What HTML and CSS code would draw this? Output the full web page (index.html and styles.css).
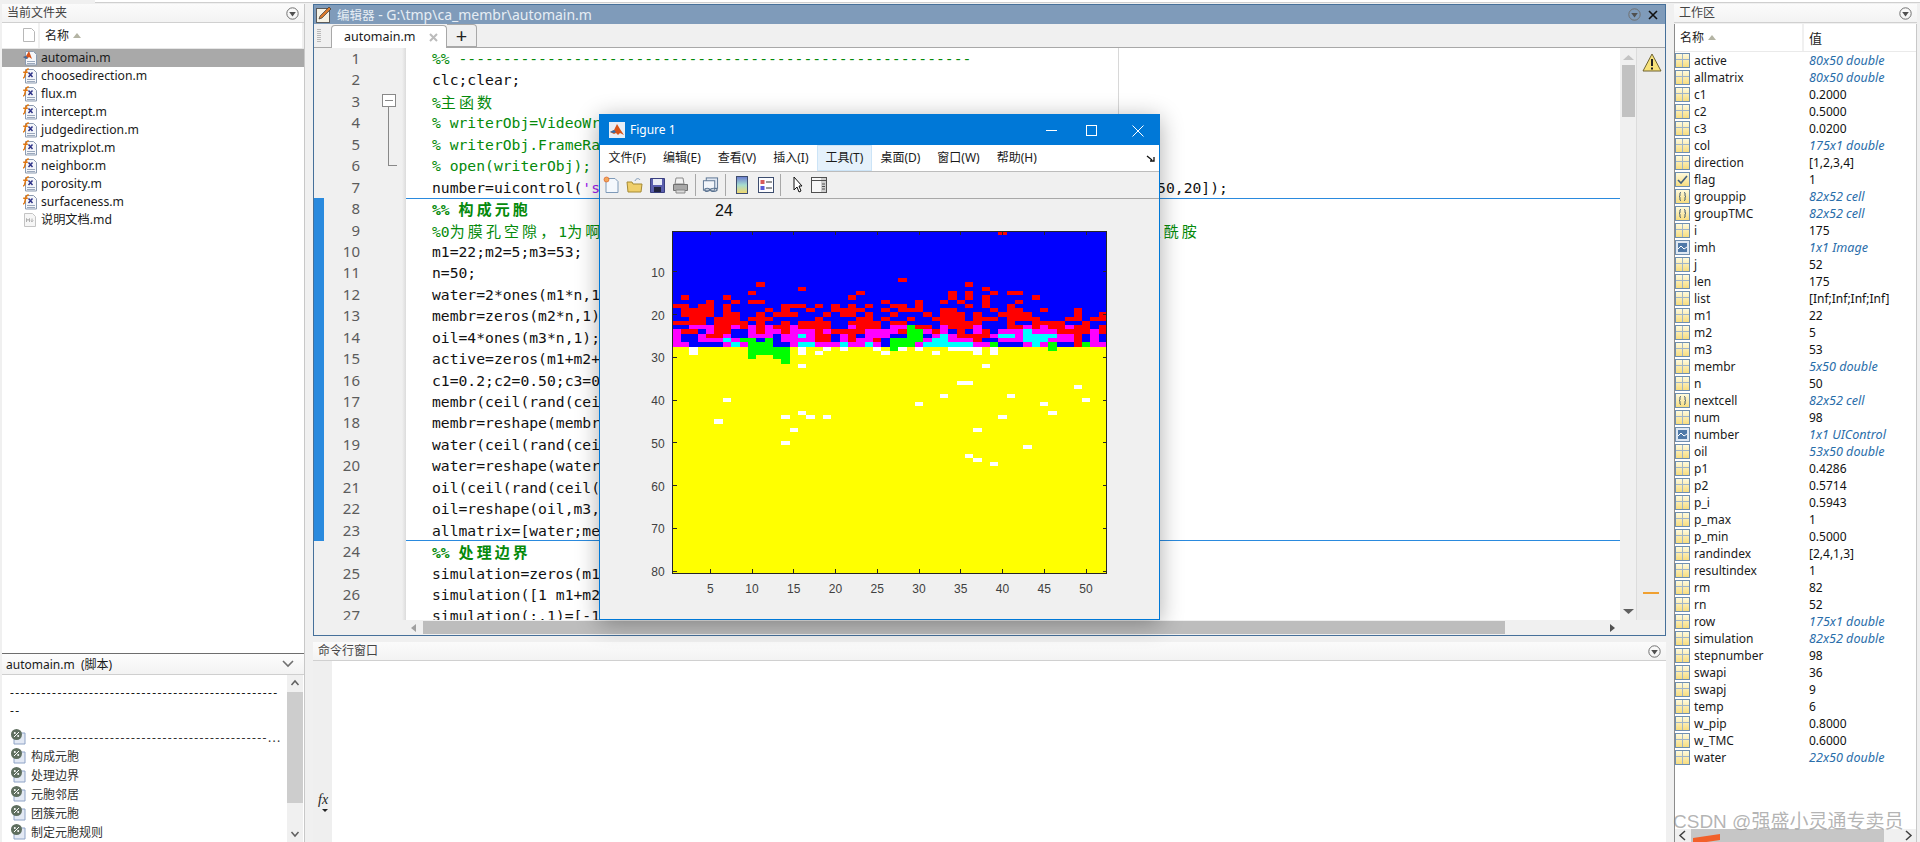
FILE: index.html
```html
<!DOCTYPE html>
<html lang="zh">
<head>
    <meta charset="UTF-8">
    <title>MATLAB</title>
    <link rel="stylesheet" href="styles.css">
</head>
<body>
<svg class="defs" width="0" height="0">
    <defs>
        <linearGradient id="yel" x1="0" y1="0" x2="0" y2="1"><stop offset="0" stop-color="#fffbe0"/><stop offset="1" stop-color="#f7dc7c"/></linearGradient>
        <symbol id="i-grid" viewBox="0 0 15 15"><rect x=".5" y=".5" width="14" height="14" fill="url(#yel)" stroke="#6f8fb0"/><path d="M7.500 1v13M1 6.500h13" stroke="#9fb4c8" fill="none"/></symbol>
        <symbol id="i-check" viewBox="0 0 15 15"><rect x=".5" y=".5" width="14" height="14" fill="url(#yel)" stroke="#6f8fb0"/><path d="M3 8l3 3 6-7" stroke="#44607c" stroke-width="1.600" fill="none"/></symbol>
        <symbol id="i-cell" viewBox="0 0 15 15"><rect x=".5" y=".5" width="14" height="14" fill="url(#yel)" stroke="#6f8fb0"/><path d="M6 3.500c-1.500 0-1 1.500-1 2.500s-.5 1.500-1 1.500c.5 0 1 .5 1 1.500s-.5 2.500 1 2.500M9 3.500c1.500 0 1 1.500 1 2.500s.5 1.500 1 1.500c-.5 0-1 .5-1 1.500s.5 2.500-1 2.500" stroke="#33506c" fill="none"/></symbol>
        <symbol id="i-obj" viewBox="0 0 15 15"><rect x=".5" y=".5" width="14" height="14" fill="#dfe8f2" stroke="#6f8fb0"/><rect x="3" y="3" width="9" height="9" fill="#4f79a8"/><path d="M3 9l3-3 3 3 3-2" stroke="#fff" fill="none"/></symbol>
        <symbol id="i-fx" viewBox="0 0 16 16"><path d="M3.500 1.500h8l3 3v10.500h-11z" fill="#f4f6fa" stroke="#8a9ab0"/><path d="M5 11.500h8M5 13.500h8" stroke="#9aa8bc"/><path d="M1 10c1.500 0 1.800-1.200 2.200-4S4.500 .8 6.800 1M1.200 4.200h4.600" stroke="#e0760f" stroke-width="1.500" fill="none"/><path d="M6.500 4.500l4 4.500M10.500 4.500L6.500 9" stroke="#2f3488" stroke-width="1.500"/></symbol>
        <symbol id="i-m" viewBox="0 0 16 16"><path d="M3.500 1.500h8l3 3v10.500h-11z" fill="#f4f6fa" stroke="#8a9ab0"/><path d="M5 11.500h8M5 13.500h8" stroke="#9aa8bc"/><path d="M1 7l3-1 3-5 3 8-3-2-2 2z" fill="#d8541a"/><path d="M1 7l3-1 2 2-2 1z" fill="#3a6ea5"/></symbol>
        <symbol id="i-md" viewBox="0 0 16 16"><path d="M2.500 1.500h8l3 3v10h-11z" fill="#f6f6f6" stroke="#c4c4c4"/><path d="M4.500 10V6.500l1.500 2 1.500-2V10M10 6.500v3M8.700 8.500l1.300 1.300 1.300-1.300" stroke="#b0b0b0" fill="none"/></symbol>
        <symbol id="i-pct" viewBox="0 0 16 16"><path d="M4 4h11v11H4z" fill="#e3e9f4" stroke="#8ea3c6"/><circle cx="6.500" cy="5.500" r="5.500" fill="#5f6f5f"/><path d="M4 8l5-5" stroke="#fff"/><circle cx="4.800" cy="4" r="1" fill="#fff"/><circle cx="8.200" cy="7" r="1" fill="#fff"/></symbol>
        <symbol id="i-menu" viewBox="0 0 13 13"><circle cx="6.500" cy="6.500" r="5.700" fill="none" stroke="#707070"/><path d="M3.200 5h6.600L6.500 9.500z" fill="#505050"/></symbol>
        <symbol id="i-fig" viewBox="0 0 16 16"><rect width="16" height="16" fill="#e8eef6"/><path d="M1 10l4-2 3-6 3 5 4 6-4-2-2 2-2-2-2 1z" fill="#d8541a"/><path d="M1 10l4-2 2 2-2 1z" fill="#2a6fb0"/></symbol>
    </defs>
</svg>

<div class="topstrip"></div>
<div class="desk">
    <div class="side">
        <section class="folder">
            <div class="ptitle">当前文件夹<svg class="pmenu"><use href="#i-menu"/></svg></div>
            <div class="fhead">
                <div class="fhead-ic"><svg width="12" height="14"><path d="M.5.500h8l3 3v10H.500z" fill="#fff" stroke="#b8b8b8"/></svg></div>
                <div class="fhead-name">名称<span class="sort"></span></div>
            </div>
            <div class="frow sel"><svg class="fi"><use href="#i-m"/></svg>automain.m</div>
            <div class="frow"><svg class="fi"><use href="#i-fx"/></svg>choosedirection.m</div>
            <div class="frow"><svg class="fi"><use href="#i-fx"/></svg>flux.m</div>
            <div class="frow"><svg class="fi"><use href="#i-fx"/></svg>intercept.m</div>
            <div class="frow"><svg class="fi"><use href="#i-fx"/></svg>judgedirection.m</div>
            <div class="frow"><svg class="fi"><use href="#i-fx"/></svg>matrixplot.m</div>
            <div class="frow"><svg class="fi"><use href="#i-fx"/></svg>neighbor.m</div>
            <div class="frow"><svg class="fi"><use href="#i-fx"/></svg>porosity.m</div>
            <div class="frow"><svg class="fi"><use href="#i-fx"/></svg>surfaceness.m</div>
            <div class="frow"><svg class="fi"><use href="#i-md"/></svg>说明文档.md</div>
        </section>
        <section class="outline">
            <div class="otitle"><span>automain.m &nbsp;(脚本)</span><svg width="12" height="8"><path d="M1 1l5 5 5-5" stroke="#707070" stroke-width="1.600" fill="none"/></svg></div>
            <div class="obody">
                <div class="olist">
                    <div class="odash">---------------------------------------------------</div>
                    <div class="odash">--</div>
                    <div class="orow first"><svg class="oi"><use href="#i-pct"/></svg><span class="odash2">---------------------------------------------...</span></div>
                    <div class="orow"><svg class="oi"><use href="#i-pct"/></svg>构成元胞</div>
                    <div class="orow"><svg class="oi"><use href="#i-pct"/></svg>处理边界</div>
                    <div class="orow"><svg class="oi"><use href="#i-pct"/></svg>元胞邻居</div>
                    <div class="orow"><svg class="oi"><use href="#i-pct"/></svg>团簇元胞</div>
                    <div class="orow"><svg class="oi"><use href="#i-pct"/></svg>制定元胞规则</div>
                </div>
                <div class="oscroll">
                    <svg width="16" height="17"><path d="M4.500 10l3.500-4 3.500 4" stroke="#606060" stroke-width="1.500" fill="none"/></svg>
                    <div class="othumb"></div>
                    <svg class="odown" width="16" height="17"><path d="M4.500 7l3.500 4 3.500-4" stroke="#606060" stroke-width="1.500" fill="none"/></svg>
                </div>
            </div>
        </section>
    </div>

    <div class="center">
        <section class="editor">
            <div class="etitle">
                <svg class="eicon" width="17" height="17" viewBox="0 0 17 17"><rect x=".5" y="2.500" width="13" height="14" fill="#f6f2e4" stroke="#5a5a5a"/><path d="M3 13l1-3 9-9 2 2-9 9z" fill="#d97a2b" stroke="#3a3a3a" stroke-width=".7"/></svg>
                <span><span class="etitle-cn">编辑器</span> - G:\tmp\ca_membr\automain.m</span>
                <svg class="emenu"><use href="#i-menu"/></svg>
                <svg class="eclose" width="10" height="10"><path d="M1 1l8 8M9 1L1 9" stroke="#111" stroke-width="1.600"/></svg>
            </div>
            <div class="tabs">
                <div class="grip"></div>
                <div class="tab">automain.m<svg class="tabx" width="9" height="9"><path d="M1 1l7 7M8 1L1 8" stroke="#bbb" stroke-width="2"/></svg></div>
                <div class="tabplus">+</div>
            </div>
            <div class="ebody">
                <div class="code">
                    <div class="ln"><span class="num">1</span><span class="src c">%% ----------------------------------------------------------</span></div>
                    <div class="ln"><span class="num">2</span><span class="src">clc;clear;</span></div>
                    <div class="ln"><span class="num">3</span><span class="src c">%<span class="cn">主函数</span></span></div>
                    <div class="ln"><span class="num">4</span><span class="src c">% writerObj=VideoWrite</span></div>
                    <div class="ln"><span class="num">5</span><span class="src c">% writerObj.FrameRate</span></div>
                    <div class="ln"><span class="num">6</span><span class="src c">% open(writerObj);</span></div>
                    <div class="ln"><span class="num">7</span><span class="src">number=uicontrol(<span class="s">'style','text','string','1234','fontsize',12,'position',[20,350,</span> 50,20]);</span></div>
                    <div class="ln sec top"><span class="num">8</span><span class="src c b">%% <span class="cn">构成元胞</span></span></div>
                    <div class="ln sec"><span class="num">9</span><span class="src c">%0<span class="cn">为膜孔空隙，</span>1<span class="cn">为啊啊啊啊，</span>2<span class="cn">为水，</span>3<span class="cn">为油，</span>4<span class="cn">为均苯三甲酰氯与哌嗪界面聚合生成，</span>5<span class="cn">为聚酰胺</span></span></div>
                    <div class="ln sec"><span class="num">10</span><span class="src">m1=22;m2=5;m3=53;</span></div>
                    <div class="ln sec"><span class="num">11</span><span class="src">n=50;</span></div>
                    <div class="ln sec"><span class="num">12</span><span class="src">water=2*ones(m1*n,1);</span></div>
                    <div class="ln sec"><span class="num">13</span><span class="src">membr=zeros(m2*n,1);</span></div>
                    <div class="ln sec"><span class="num">14</span><span class="src">oil=4*ones(m3*n,1);</span></div>
                    <div class="ln sec"><span class="num">15</span><span class="src">active=zeros(m1+m2+m</span></div>
                    <div class="ln sec"><span class="num">16</span><span class="src">c1=0.2;c2=0.50;c3=0.</span></div>
                    <div class="ln sec"><span class="num">17</span><span class="src">membr(ceil(rand(ceil</span></div>
                    <div class="ln sec"><span class="num">18</span><span class="src">membr=reshape(membr,</span></div>
                    <div class="ln sec"><span class="num">19</span><span class="src">water(ceil(rand(ceil</span></div>
                    <div class="ln sec"><span class="num">20</span><span class="src">water=reshape(water,</span></div>
                    <div class="ln sec"><span class="num">21</span><span class="src">oil(ceil(rand(ceil(m</span></div>
                    <div class="ln sec"><span class="num">22</span><span class="src">oil=reshape(oil,m3,n</span></div>
                    <div class="ln sec bottom"><span class="num">23</span><span class="src">allmatrix=[water;mem</span></div>
                    <div class="ln"><span class="num">24</span><span class="src c b">%% <span class="cn">处理边界</span></span></div>
                    <div class="ln"><span class="num">25</span><span class="src">simulation=zeros(m1+</span></div>
                    <div class="ln"><span class="num">26</span><span class="src">simulation([1 m1+m2+</span></div>
                    <div class="ln"><span class="num">27</span><span class="src">simulation(:,1)=[-1;</span></div>
                    <div class="ln"><span class="num">28</span><span class="src"></span></div>
                </div>
                <div class="margin"></div>
                <div class="fold"></div>
                <div class="vscroll">
                    <svg class="sv-up" width="13" height="7"><path d="M6.500 1L12 6H1z" fill="#c4c4c4"/></svg>
                    <div class="vthumb"></div>
                    <svg class="sv-down" width="13" height="7"><path d="M6.500 6L12 1H1z" fill="#606060"/></svg>
                </div>
                <div class="msgbar">
                    <svg width="20" height="19" viewBox="0 0 20 19"><path d="M10 1l9 17H1z" fill="#f7e27a" stroke="#6e6230"/><path d="M10 6v7M10 14.500v2" stroke="#222" stroke-width="2"/></svg>
                    <div class="msgmark"></div>
                </div>
            </div>
            <div class="hscroll">
                <svg width="8" height="10"><path d="M6 1L1 5l5 4z" fill="#a0a0a0"/></svg>
                <div class="hthumb"></div>
                <svg width="8" height="10"><path d="M2 1l5 4-5 4z" fill="#505050"/></svg>
            </div>
        </section>
        <section class="cmd">
            <div class="ptitle">命令行窗口<svg class="pmenu"><use href="#i-menu"/></svg></div>
            <div class="cbody">
                <div class="cgutter"><span class="fxmark">fx</span><span class="fxarrow"></span></div>
            </div>
        </section>
    </div>

    <section class="workspace">
        <div class="ptitle">工作区<svg class="pmenu"><use href="#i-menu"/></svg></div>
        <div class="wbox">
            <div class="whead"><div class="wh-name">名称<span class="sort"></span></div><div class="wh-val">值</div></div>
            <div class="wrow"><svg class="vi"><use href="#i-grid"/></svg><span class="vn">active</span><span class="vv d">80x50 double</span></div>
            <div class="wrow"><svg class="vi"><use href="#i-grid"/></svg><span class="vn">allmatrix</span><span class="vv d">80x50 double</span></div>
            <div class="wrow"><svg class="vi"><use href="#i-grid"/></svg><span class="vn">c1</span><span class="vv">0.2000</span></div>
            <div class="wrow"><svg class="vi"><use href="#i-grid"/></svg><span class="vn">c2</span><span class="vv">0.5000</span></div>
            <div class="wrow"><svg class="vi"><use href="#i-grid"/></svg><span class="vn">c3</span><span class="vv">0.0200</span></div>
            <div class="wrow"><svg class="vi"><use href="#i-grid"/></svg><span class="vn">col</span><span class="vv d">175x1 double</span></div>
            <div class="wrow"><svg class="vi"><use href="#i-grid"/></svg><span class="vn">direction</span><span class="vv">[1,2,3,4]</span></div>
            <div class="wrow"><svg class="vi"><use href="#i-check"/></svg><span class="vn">flag</span><span class="vv">1</span></div>
            <div class="wrow"><svg class="vi"><use href="#i-cell"/></svg><span class="vn">grouppip</span><span class="vv d">82x52 cell</span></div>
            <div class="wrow"><svg class="vi"><use href="#i-cell"/></svg><span class="vn">groupTMC</span><span class="vv d">82x52 cell</span></div>
            <div class="wrow"><svg class="vi"><use href="#i-grid"/></svg><span class="vn">i</span><span class="vv">175</span></div>
            <div class="wrow"><svg class="vi"><use href="#i-obj"/></svg><span class="vn">imh</span><span class="vv d">1x1 Image</span></div>
            <div class="wrow"><svg class="vi"><use href="#i-grid"/></svg><span class="vn">j</span><span class="vv">52</span></div>
            <div class="wrow"><svg class="vi"><use href="#i-grid"/></svg><span class="vn">len</span><span class="vv">175</span></div>
            <div class="wrow"><svg class="vi"><use href="#i-grid"/></svg><span class="vn">list</span><span class="vv">[Inf;Inf;Inf;Inf]</span></div>
            <div class="wrow"><svg class="vi"><use href="#i-grid"/></svg><span class="vn">m1</span><span class="vv">22</span></div>
            <div class="wrow"><svg class="vi"><use href="#i-grid"/></svg><span class="vn">m2</span><span class="vv">5</span></div>
            <div class="wrow"><svg class="vi"><use href="#i-grid"/></svg><span class="vn">m3</span><span class="vv">53</span></div>
            <div class="wrow"><svg class="vi"><use href="#i-grid"/></svg><span class="vn">membr</span><span class="vv d">5x50 double</span></div>
            <div class="wrow"><svg class="vi"><use href="#i-grid"/></svg><span class="vn">n</span><span class="vv">50</span></div>
            <div class="wrow"><svg class="vi"><use href="#i-cell"/></svg><span class="vn">nextcell</span><span class="vv d">82x52 cell</span></div>
            <div class="wrow"><svg class="vi"><use href="#i-grid"/></svg><span class="vn">num</span><span class="vv">98</span></div>
            <div class="wrow"><svg class="vi"><use href="#i-obj"/></svg><span class="vn">number</span><span class="vv d">1x1 UIControl</span></div>
            <div class="wrow"><svg class="vi"><use href="#i-grid"/></svg><span class="vn">oil</span><span class="vv d">53x50 double</span></div>
            <div class="wrow"><svg class="vi"><use href="#i-grid"/></svg><span class="vn">p1</span><span class="vv">0.4286</span></div>
            <div class="wrow"><svg class="vi"><use href="#i-grid"/></svg><span class="vn">p2</span><span class="vv">0.5714</span></div>
            <div class="wrow"><svg class="vi"><use href="#i-grid"/></svg><span class="vn">p_i</span><span class="vv">0.5943</span></div>
            <div class="wrow"><svg class="vi"><use href="#i-grid"/></svg><span class="vn">p_max</span><span class="vv">1</span></div>
            <div class="wrow"><svg class="vi"><use href="#i-grid"/></svg><span class="vn">p_min</span><span class="vv">0.5000</span></div>
            <div class="wrow"><svg class="vi"><use href="#i-grid"/></svg><span class="vn">randindex</span><span class="vv">[2,4,1,3]</span></div>
            <div class="wrow"><svg class="vi"><use href="#i-grid"/></svg><span class="vn">resultindex</span><span class="vv">1</span></div>
            <div class="wrow"><svg class="vi"><use href="#i-grid"/></svg><span class="vn">rm</span><span class="vv">82</span></div>
            <div class="wrow"><svg class="vi"><use href="#i-grid"/></svg><span class="vn">rn</span><span class="vv">52</span></div>
            <div class="wrow"><svg class="vi"><use href="#i-grid"/></svg><span class="vn">row</span><span class="vv d">175x1 double</span></div>
            <div class="wrow"><svg class="vi"><use href="#i-grid"/></svg><span class="vn">simulation</span><span class="vv d">82x52 double</span></div>
            <div class="wrow"><svg class="vi"><use href="#i-grid"/></svg><span class="vn">stepnumber</span><span class="vv">98</span></div>
            <div class="wrow"><svg class="vi"><use href="#i-grid"/></svg><span class="vn">swapi</span><span class="vv">36</span></div>
            <div class="wrow"><svg class="vi"><use href="#i-grid"/></svg><span class="vn">swapj</span><span class="vv">9</span></div>
            <div class="wrow"><svg class="vi"><use href="#i-grid"/></svg><span class="vn">temp</span><span class="vv">6</span></div>
            <div class="wrow"><svg class="vi"><use href="#i-grid"/></svg><span class="vn">w_pip</span><span class="vv">0.8000</span></div>
            <div class="wrow"><svg class="vi"><use href="#i-grid"/></svg><span class="vn">w_TMC</span><span class="vv">0.6000</span></div>
            <div class="wrow"><svg class="vi"><use href="#i-grid"/></svg><span class="vn">water</span><span class="vv d">22x50 double</span></div>
            <div class="wscroll">
                <svg width="9" height="11"><path d="M7 1L2 5.500 7 10" stroke="#404040" stroke-width="1.500" fill="none"/></svg>
                <div class="wthumb"></div>
                <svg width="9" height="11"><path d="M2 1l5 4.500L2 10" stroke="#404040" stroke-width="1.500" fill="none"/></svg>
            </div>
        </div>
    </section>
</div>

<!-- figure window floats over the desktop -->
<div class="figure">
    <div class="ftitle">
        <svg class="ficon"><use href="#i-fig"/></svg>
        <span class="fname">Figure 1</span>
        <svg class="fbtn min" width="11" height="11"><path d="M0 5.500h11" stroke="#fff"/></svg>
        <svg class="fbtn max" width="11" height="11"><rect x=".5" y=".5" width="10" height="10" fill="none" stroke="#fff"/></svg>
        <svg class="fbtn cls" width="12" height="12"><path d="M.5.500l11 11M11.500.500l-11 11" stroke="#fff"/></svg>
    </div>
    <div class="fmenu">
        <span class="mi">文件(F)</span>
        <span class="mi">编辑(E)</span>
        <span class="mi">查看(V)</span>
        <span class="mi">插入(I)</span>
        <span class="mi hot">工具(T)</span>
        <span class="mi">桌面(D)</span>
        <span class="mi">窗口(W)</span>
        <span class="mi">帮助(H)</span>
        <svg class="undock" width="9" height="8"><path d="M1 1l5 4M4 6h4V2" stroke="#111" fill="none" stroke-width="1.300"/></svg>
    </div>
    <div class="ftools">
        <svg width="17" height="18" viewBox="0 0 17 18"><path d="M3 2.500h9l3 3v11H3z" fill="#f4f8fd" stroke="#7f9ab8"/><circle cx="3.500" cy="3.500" r="2.500" fill="#f2a65a" stroke="#d8541a" stroke-width=".6"/></svg>
        <svg width="17" height="18" viewBox="0 0 17 18"><path d="M1 6h5l1 2h9l-1 8H2z" fill="#f0cf6a" stroke="#a58a35"/><path d="M9 5c1-3 4-3 5-1" stroke="#7f9ab8" fill="none"/></svg>
        <svg width="17" height="18" viewBox="0 0 17 18"><path d="M1.500 2.500h14v14h-14z" fill="#5a5fae" stroke="#3a3f7f"/><rect x="4" y="3" width="9" height="6" fill="#e8ecf6"/><rect x="5" y="11" width="7" height="5" fill="#20243f"/></svg>
        <svg width="17" height="18" viewBox="0 0 17 18"><path d="M4 2h7l1 6H3z" fill="#f2f2f2" stroke="#8a8a8a"/><path d="M1.500 8.500h14v6h-14z" fill="#a8a8a8" stroke="#707070"/><path d="M4 14h9v3H4z" fill="#dcdcdc" stroke="#888"/></svg>
        <span class="tsep"></span>
        <svg width="17" height="18" viewBox="0 0 18 18"><rect x="4.500" y="1.500" width="12" height="11" fill="#dfe7f2" stroke="#5a7391"/><rect x="1.500" y="4.500" width="12" height="10" fill="#f2f5fa" stroke="#5a7391"/><path d="M3 14c0-2 5-2 5 0s-5 3-5 0M9 14c0-2 7-2 7 0s-7 3-7 0" stroke="#5a7391" stroke-width="1.200" fill="none"/></svg>
        <span class="tsep"></span>
        <svg class="t12" width="12" height="18" viewBox="0 0 12 18"><defs><linearGradient id="cbar" x1="0" y1="0" x2="0" y2="1"><stop offset="0" stop-color="#6a7ad0"/><stop offset=".5" stop-color="#a6dccf"/><stop offset="1" stop-color="#f4d86a"/></linearGradient></defs><rect x=".5" y=".5" width="11" height="17" fill="url(#cbar)" stroke="#3d4d6e"/></svg>
        <svg width="16" height="18" viewBox="0 0 16 18"><rect x=".5" y="1.500" width="15" height="15" fill="#fdfdff" stroke="#3d4d6e"/><rect x="2.500" y="4" width="4" height="4" fill="#d85a5a"/><rect x="2.500" y="10" width="4" height="4" fill="#5a5ad8"/><path d="M8 6h6M8 12h6" stroke="#333"/></svg>
        <span class="tsep"></span>
        <svg class="t10" width="10" height="18" viewBox="0 0 10 18"><path d="M1 1v13l3-3 2 5 2-1-2-5h3z" fill="#fff" stroke="#111"/></svg>
        <svg width="16" height="18" viewBox="0 0 16 18"><rect x=".5" y="1.500" width="15" height="15" fill="#e8e8e8" stroke="#505050"/><rect x="1" y="2" width="9" height="14" fill="#f8f8f8"/><rect x="10" y="2" width="5" height="14" fill="#cfcfcf"/><path d="M1 4.500h14M11 8h3M11 10.500h3M11 13h3" stroke="#505050"/></svg>
    </div>
    <div class="canvas">
        <span class="counter">24</span>
        <svg id="plot" class="plot" width="559" height="420"></svg>
    </div>
</div>

<div class="watermark">CSDN @强盛小灵通专卖员</div>
<div class="orange"></div>

<script src="plot.js"></script>
</body>
</html>
```
FILE: styles.css
```css
html, body {
    margin: 0;
    padding: 0;
    height: 842px;
    overflow: hidden;
}
body {
    background-color: #f0f0f0;
    font-family: "Noto Sans", "Noto Sans CJK SC", sans-serif;
    font-size: 12px;
    color: #1a1a1a;
    position: relative;
}
.defs {
    position: absolute;
}
.topstrip {
    height: 2px;
    margin-left: 95px;
    background-color: #fff;
    border-bottom: 1px solid #cfcfcf;
}
.desk {
    display: flex;
    height: 839px;
    padding: 1px 3px 0 2px;
    box-sizing: border-box;
}

/* panel titles */
.ptitle {
    height: 18px;
    line-height: 18px;
    padding-left: 5px;
    background: linear-gradient(#fbfbfb, #f3f3f3);
    border-bottom: 1px solid #d0d0d0;
    color: #444;
    position: relative;
    flex: none;
}
.pmenu {
    position: absolute;
    right: 5px;
    top: 3px;
    width: 13px;
    height: 13px;
}
.sort {
    display: inline-block;
    margin-left: 4px;
    border-left: 4px solid transparent;
    border-right: 4px solid transparent;
    border-bottom: 5px solid #b4b4a4;
    vertical-align: 2px;
}

/* left column */
.side {
    width: 303px;
    flex: none;
    display: flex;
    flex-direction: column;
    margin-right: 8px;
    border-right: 1px solid #c8c8c8;
    box-sizing: border-box;
}
.folder {
    height: 649px;
    background-color: #fff;
    border-bottom: 1px solid #6e6e6e;
    box-sizing: content-box;
}
.fhead {
    display: flex;
    height: 25px;
    background-color: #fff;
    border-bottom: 1px solid #e6e6e6;
    font-size: 12px;
}
.fhead-ic {
    width: 38px;
    padding: 5px 0 0 21px;
    box-sizing: border-box;
    border-right: 2px solid #f0f0f0;
}
.fhead-name {
    flex: 1;
    line-height: 25px;
    padding-left: 5px;
    border-right: 2px solid #f0f0f0;
}
.frow {
    height: 18px;
    line-height: 18px;
    padding-left: 39px;
    position: relative;
    white-space: nowrap;
    font-size: 12.200px;
}
.frow.sel {
    background-color: #a9a9a9;
}
.fi {
    position: absolute;
    left: 20px;
    top: 1px;
    width: 16px;
    height: 16px;
}
.outline {
    flex: 1;
    display: flex;
    flex-direction: column;
    background-color: #fff;
    min-height: 0;
}
.otitle {
    height: 20px;
    padding: 0 10px 0 4px;
    display: flex;
    justify-content: space-between;
    align-items: center;
    background: linear-gradient(#fdfdfd, #f3f3f3);
    border-bottom: 1px solid #cfcfcf;
    flex: none;
}
.obody {
    flex: 1;
    display: flex;
    min-height: 0;
}
.olist {
    flex: 1;
    padding: 9px 0 0 8px;
    overflow: hidden;
}
.odash {
    height: 18px;
    line-height: 18px;
    letter-spacing: 1.400px;
    white-space: nowrap;
    overflow: hidden;
}
.orow {
    height: 19px;
    line-height: 19px;
    padding-left: 21px;
    position: relative;
    color: #333;
    white-space: nowrap;
}
.orow.first {
    margin-top: 8px;
}
.odash2 {
    letter-spacing: 1.400px;
}
.oi {
    position: absolute;
    left: 0;
    top: 1px;
    width: 16px;
    height: 16px;
}
.oscroll {
    width: 16px;
    flex: none;
    background-color: #f0f0f0;
    display: flex;
    flex-direction: column;
    margin-right: 1px;
}
.othumb {
    height: 111px;
    background-color: #cdcdcd;
}
.odown {
    margin-top: auto;
}

/* editor */
.center {
    width: 1353px;
    flex: none;
    display: flex;
    flex-direction: column;
    margin-right: 8px;
}
.editor {
    height: 632px;
    box-sizing: border-box;
    border: 1px solid #46709a;
    display: flex;
    flex-direction: column;
    position: relative;
    background-color: #f0f0f0;
}
.etitle {
    height: 19px;
    flex: none;
    background-color: #7f9bba;
    color: #e6edf4;
    font-size: 14px;
    line-height: 19px;
    padding-left: 23px;
    position: relative;
}
.etitle-cn {
    font-size: 12.500px;
}
.eicon {
    position: absolute;
    left: 2px;
    top: 1px;
}
.emenu {
    position: absolute;
    right: 24px;
    top: 3px;
    width: 13px;
    height: 13px;
}
.eclose {
    position: absolute;
    right: 7px;
    top: 5px;
}
.tabs {
    height: 24px;
    flex: none;
    display: flex;
    align-items: flex-end;
    border-bottom: 1px solid #a8a8a8;
    box-sizing: border-box;
}
.grip {
    width: 4px;
    height: 14px;
    margin: 0 10px 4px 3px;
    background: repeating-linear-gradient(#b8b8b8 0 1px, transparent 1px 2px);
}
.tab {
    width: 116px;
    height: 23px;
    line-height: 22px;
    background-color: #fff;
    border: 1px solid #a8a8a8;
    border-bottom: none;
    border-radius: 4px 4px 0 0;
    padding-left: 12px;
    box-sizing: border-box;
    position: relative;
    margin-bottom: -1px;
    font-size: 12.500px;
}
.tabx {
    position: absolute;
    right: 8px;
    top: 7px;
}
.tabplus {
    width: 30px;
    height: 23px;
    line-height: 21px;
    text-align: center;
    font-size: 20px;
    background-color: #f0f0f0;
    border: 1px solid #a8a8a8;
    border-left: none;
    border-radius: 0 4px 0 0;
    box-sizing: border-box;
    color: #222;
}
.ebody {
    flex: 1;
    position: relative;
    min-height: 0;
    display: flex;
}
.code {
    flex: 1;
    min-width: 0;
    overflow: hidden;
    background-color: #fff;
    font-family: "DejaVu Sans Mono", monospace;
    font-size: 14.700px;
}
.ln {
    display: flex;
    height: 21.450px;
    line-height: 21.450px;
    white-space: pre;
}
.num {
    width: 92px;
    flex: none;
    box-sizing: border-box;
    padding-right: 46px;
    text-align: right;
    background: linear-gradient(90deg, #f0f0f0 88px, #dcdcdc);
    font-family: "Noto Sans", sans-serif;
    font-size: 15px;
    color: #5c5c5c;
}
.sec .num {
    box-shadow: inset 10px 0 0 #2a8ade;
}
.top {
    box-shadow: inset 0 1px 0 #2a8ade;
}
.bottom {
    box-shadow: inset 0 -1px 0 #2a8ade;
}
.src {
    padding-left: 26px;
    color: #111;
}
.c {
    color: #058a0b;
}
.b {
    font-weight: bold;
}
.s {
    color: #a020f0;
}
.cn {
    font-family: "Noto Sans CJK SC", sans-serif;
    font-size: 15px;
    letter-spacing: 3.100px;
}
.margin {
    position: absolute;
    left: 804px;
    top: 0;
    bottom: 0;
    width: 1px;
    background-color: #d8d8d8;
}
.fold {
    position: absolute;
    left: 74px;
    top: 47px;
    width: 8px;
    height: 70px;
    border-left: 1px solid #888;
    border-bottom: 1px solid #888;
}
.fold::before {
    content: "";
    position: absolute;
    left: -7px;
    top: -1px;
    width: 12px;
    height: 11px;
    border: 1px solid #888;
    background: linear-gradient(#888, #888) center / 8px 1px no-repeat #fff;
}
.vscroll {
    width: 16px;
    flex: none;
    background-color: #f0f0f0;
    display: flex;
    flex-direction: column;
    align-items: center;
    padding-top: 6px;
    box-sizing: border-box;
}
.vthumb {
    width: 13px;
    height: 52px;
    margin-top: 4px;
    background-color: #c2c2c2;
}
.sv-down {
    margin-top: auto;
    margin-bottom: 5px;
}
.msgbar {
    width: 29px;
    flex: none;
    padding: 5px 0 0 5px;
    box-sizing: border-box;
    background-color: #ececec;
    border-left: 1px solid #dcdcdc;
    position: relative;
}
.msgmark {
    position: absolute;
    left: 6px;
    top: 544px;
    width: 16px;
    height: 2px;
    background-color: #f0a030;
}
.hscroll {
    height: 15px;
    flex: none;
    margin-left: 92px;
    margin-right: 45px;
    display: flex;
    align-items: center;
    background-color: #f0f0f0;
    padding: 0 4px;
    box-sizing: border-box;
}
.hthumb {
    width: 1082px;
    height: 13px;
    margin-left: 5px;
    margin-right: auto;
    background-color: #bdbdbd;
}

/* command window */
.cmd {
    flex: 1;
    margin-top: 6px;
    display: flex;
    flex-direction: column;
    min-height: 0;
}
.cbody {
    flex: 1;
    background-color: #fff;
}
.cgutter {
    width: 19px;
    height: 100%;
    background-color: #efefef;
    position: relative;
}
.fxmark {
    position: absolute;
    left: 5px;
    top: 131px;
    font-family: "Liberation Serif", serif;
    font-style: italic;
    font-size: 14px;
    color: #222;
}
.fxarrow {
    position: absolute;
    left: 9px;
    top: 148px;
    border-left: 3px solid transparent;
    border-right: 3px solid transparent;
    border-top: 3px solid #222;
}

/* workspace */
.workspace {
    flex: 1;
    display: flex;
    flex-direction: column;
    min-width: 0;
}
.wbox {
    flex: 1;
    margin-top: 1px;
    background-color: #fff;
    border-left: 1px solid #8c8c8c;
    border-right: 1px solid #c8c8c8;
    position: relative;
    overflow: hidden;
}
.whead {
    display: flex;
    height: 28px;
    line-height: 28px;
    border-bottom: 1px solid #eaeaea;
    box-sizing: border-box;
}
.wh-name {
    width: 129px;
    padding-left: 5px;
    box-sizing: border-box;
    border-right: 2px solid #f0f0f0;
}
.wh-val {
    padding-left: 5px;
    font-size: 13px;
}
.wrow {
    display: flex;
    height: 17px;
    line-height: 17px;
    white-space: nowrap;
}
.vi {
    width: 15px;
    height: 15px;
    margin: 1px 4px 0 0;
    flex: none;
}
.vn {
    width: 115px;
    flex: none;
}
.vv {
    color: #111;
}
.vv.d {
    color: #2a6eaa;
    font-style: italic;
    font-size: 12.600px;
}
.wscroll {
    position: absolute;
    left: 0;
    right: 0;
    bottom: 0;
    height: 13px;
    display: flex;
    justify-content: space-between;
    align-items: center;
    background-color: #f0f0f0;
    padding: 0 3px;
}
.wthumb {
    width: 193px;
    height: 13px;
    margin-left: 4px;
    margin-right: auto;
    background-color: #c6c6c6;
}

/* figure window */
.figure {
    position: absolute;
    left: 599px;
    top: 114px;
    width: 561px;
    height: 506px;
    box-sizing: border-box;
    border: 1px solid #0078d7;
    background-color: #f0f0f0;
    box-shadow: 0 4px 22px rgba(0, 0, 0, .32);
    display: flex;
    flex-direction: column;
}
.ftitle {
    height: 30px;
    flex: none;
    background-color: #0078d7;
    color: #fff;
    position: relative;
}
.ficon {
    position: absolute;
    left: 9px;
    top: 7px;
    width: 16px;
    height: 16px;
}
.fname {
    position: absolute;
    left: 30px;
    top: 5px;
    font-size: 12px;
    line-height: 20px;
}
.fbtn {
    position: absolute;
    top: 10px;
}
.min { left: 446px; }
.max { left: 486px; }
.cls { left: 532px; }
.fmenu {
    height: 27px;
    flex: none;
    background-color: #fff;
    border-bottom: 1px solid #bcbcbc;
    box-sizing: border-box;
    display: flex;
    align-items: stretch;
    position: relative;
}
.mi {
    line-height: 26px;
    padding: 0 8.500px;
    font-size: 12px;
    white-space: nowrap;
    flex: none;
}
.mi.hot {
    background-color: #e5f1fb;
    box-shadow: inset 0 0 0 1px #cce4f7;
}
.undock {
    position: absolute;
    right: 4px;
    top: 10px;
}
.ftools {
    height: 27px;
    flex: none;
    display: flex;
    align-items: center;
    gap: 6px;
    padding-left: 3px;
    border-bottom: 1px solid #a8a8a8;
    box-sizing: border-box;
}
.tsep {
    width: 1px;
    height: 22px;
    background-color: #a8a8a8;
}
.t12 { margin: 0 4px; }
.t10 { margin: 0 2px 0 6px; }
.canvas {
    flex: 1;
    position: relative;
    min-height: 0;
}
.counter {
    position: absolute;
    left: 115px;
    top: 1px;
    font-family: "Liberation Sans", sans-serif;
    font-size: 16px;
    line-height: 22px;
    color: #111;
}
.plot {
    display: block;
}
.plot text {
    font-family: "Liberation Sans", sans-serif;
    font-size: 12px;
    fill: #404040;
}

/* page overlays */
.watermark {
    position: absolute;
    left: 1673px;
    top: 808px;
    font-family: "Liberation Sans", "Noto Sans CJK SC", sans-serif;
    font-size: 19px;
    line-height: 28px;
    color: rgba(130, 130, 130, .6);
    white-space: nowrap;
}
.orange {
    position: absolute;
    left: 1693px;
    top: 836px;
    width: 27px;
    height: 6px;
    background-color: #f2602a;
    transform: skewY(-8deg);
}
```
FILE: plot.js
```js
// draws the axes of Figure 1, cells are transcribed as "colour col col-col; ..."
var rows = {
    0: "r 39",
    11: "r 27",
    12: "r 10 35",
    13: "r 15 37",
    14: "r 9 22 33 35 38 40-41",
    15: "r 1 6 21 33 35 37 43",
    16: "r 4 7 9-10 25 29 32 34 37 41",
    17: "r 0-1 3-4 6 13-15 17 19 21 23 26-27 29 35 37 40",
    18: "r 1-4 6 11 13 16 19-22 25 27-29 32-33 38 40-41 44 48",
    19: "r 1-4 6-7 10 12-14 18 20-21 23 26 30 32-34 36 39-42 48 51",
    20: "r 2-3 5-7 9-11 17 22-23 25 28 31-34 36-38 40-43 47-48 50-51",
    21: "r 0-3 5-8 10 13 15-18 21-24 26-27 32-36 40 43-46 49",
    22: "m 2-4 7 9 11 14 21 26-27 32 36 42 44 47; r 5-6 8 10 12-13 15-18 22-24 29-30 33-35 40-41 43 45-46 48-49 51; g 28",
    23: "m 0 4 9 11-12 14-16 18 23-26 30 32 36 39-41 43-45 50; r 1-2 5-6 10 13 17 19-22 27 31 34 37 46-49 51; c 42; g 28-29",
    24: "m 0 3 6 9-11 13-14 16 20 23-25 31 33 38-39 41 46-47 50; r 4-5 17-18 21 34-37 48; c 15 32 39-40 42-45; g 28-29",
    25: "m 0 3-5 7 13-16 20 22-23 30 33-35 39-41 45-47 50; r 17-18 21 24 36 48; c 6 31-32 42-44; g 8-9 11 26-29",
    26: "m 0-1 6 8 14 17-19 21-22 24 29 36-37 42 44 50-51; r 48; c 7 15-16 20 23 30-35 43; g 9-11 26-28 38 45 49",
    27: "w 2 15 18 20 24 27 29 33-36 38; g 9-13 26 45",
    28: "w 2 15 17 25 31 36 38; g 9-13",
    29: "g 9 12-13",
    30: "g 13",
    31: "w 15 37",
    35: "w 34-35",
    36: "w 48",
    38: "w 32 40",
    39: "w 6 49",
    40: "w 29 44",
    42: "w 15 45",
    43: "w 13 16 18 39",
    44: "w 5",
    46: "w 14 36",
    49: "w 13",
    50: "w 42",
    52: "w 35",
    53: "w 36",
    54: "w 38"
};
var colours = { r: "#ff0000", m: "#ff00ff", c: "#00ffff", g: "#00ff00", w: "#ffffff" };

var svg = document.getElementById("plot");
var NS = "http://www.w3.org/2000/svg";
var left = 72.7, top_ = 32.1, cw = 8.35, ch = 4.277;
var width = cw * 52, height = ch * 80;

function add(tag, attrs, text) {
    var el = document.createElementNS(NS, tag);
    for (var k in attrs) el.setAttribute(k, attrs[k]);
    if (text) el.textContent = text;
    svg.appendChild(el);
}
function cell(col, row, n, h, fill) {
    add("rect", {
        x: left + col * cw, y: top_ + row * ch, width: n * cw, height: h * ch,
        fill: fill, "shape-rendering": "crispEdges"
    });
}

cell(0, 0, 52, 27, "#0000ff");
cell(0, 27, 52, 53, "#ffff00");

Object.keys(rows).forEach(function (row) {
    rows[row].split(";").forEach(function (part) {
        var items = part.trim().split(" ");
        for (var i = 1; i < items.length; i++) {
            var range = items[i].split("-");
            var from = +range[0];
            var to = range.length > 1 ? +range[1] : from;
            cell(from, +row, to - from + 1, 1, colours[items[0]]);
        }
    });
});

// box and ticks
add("rect", { x: left, y: top_, width: width, height: height, fill: "none", stroke: "#262626", "shape-rendering": "crispEdges" });
var bottom = top_ + height, right = left + width;
for (var x = 5; x <= 50; x += 5) {
    var px = left + (x - 0.5) * cw;
    add("path", { d: "M" + px + " " + bottom + "v-4M" + px + " " + top_ + "v4", stroke: "#262626", "shape-rendering": "crispEdges" });
    add("text", { x: px, y: bottom + 20, "text-anchor": "middle" }, String(x));
}
for (var y = 10; y <= 80; y += 10) {
    var py = top_ + (y - 0.5) * ch;
    add("path", { d: "M" + left + " " + py + "h4M" + right + " " + py + "h-4", stroke: "#262626", "shape-rendering": "crispEdges" });
    add("text", { x: left - 8, y: py + 5, "text-anchor": "end" }, String(y));
}
```
